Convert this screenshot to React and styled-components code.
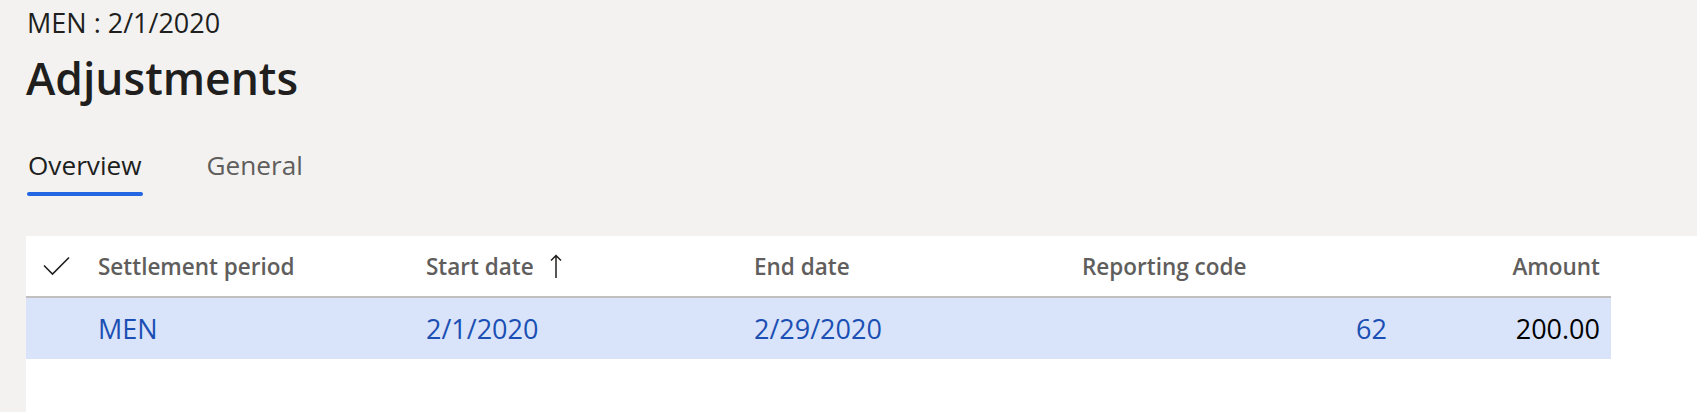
import React from "react";
import styled, { createGlobalStyle } from "styled-components";

const Global = createGlobalStyle`
  html, body {
    margin: 0;
    padding: 0;
    background: #f3f2f1;
    font-family: "Open Sans", "Noto Sans", sans-serif;
    color: #201f1e;
  }
  * { box-sizing: border-box; }
`;

const Page = styled.div`
  width: 1697px;
  height: 412px;
  overflow: hidden;
  padding-left: 26px;
  display: flex;
  flex-direction: column;
`;

const Caption = styled.div`
  height: 46px;
  line-height: 46px;
  font-size: 27px;
  color: #201f1e;
  padding-left: 1px;
`;

const Title = styled.h1`
  margin: 2px 0 0 0;
  height: 60px;
  line-height: 60px;
  font-size: 44.4px;
  font-weight: 600;
  color: #201f1e;
`;

const TabBar = styled.div`
  margin-top: 37px;
  display: flex;
  gap: 61px;
`;

const Tab = styled.div`
  display: flex;
  flex-direction: column;
  padding: 0 2px;
`;

const TabLabel = styled.span`
  height: 40px;
  line-height: 40px;
  font-size: 26.2px;
  color: ${(p) => (p.$active ? "#201f1e" : "#605e5c")};
`;

const TabLine = styled.span`
  margin-top: 7px;
  height: 4px;
  margin-left: -1px;
  margin-right: -1px;
  border-radius: 2px;
  background: ${(p) => (p.$active ? "#2266e3" : "transparent")};
`;

const Card = styled.div`
  margin-top: 40px;
  flex: 1;
  background: #ffffff;
`;

const cols = "72px 328px 328px 328px 316px 213px";

const HeaderRow = styled.div`
  display: grid;
  grid-template-columns: ${cols};
  width: 1585px;
  height: 62px;
  align-items: center;
  border-bottom: 2px solid #c2c0be;
`;

const DataRow = styled.div`
  display: grid;
  grid-template-columns: ${cols};
  width: 1585px;
  height: 61px;
  align-items: center;
  background: #d9e4fa;
`;

const HeadCell = styled.div`
  font-size: 22.5px;
  font-weight: 600;
  color: #605e5c;
  display: flex;
  align-items: center;
  justify-content: ${(p) => (p.$right ? "flex-end" : "flex-start")};
  padding-right: ${(p) => (p.$right ? "11px" : "0")};
  white-space: nowrap;
`;

const CheckCell = styled.div`
  padding-left: 17px;
  display: flex;
  align-items: center;
`;

const Cell = styled.div`
  font-size: 27px;
  color: ${(p) => (p.$plain ? "#000000" : "#1b4fb4")};
  text-align: ${(p) => (p.$right ? "right" : "left")};
  padding-right: ${(p) => (p.$right ? "11px" : "0")};
  white-space: nowrap;
`;

const SortArrow = styled.svg`
  margin-left: 16px;
  flex: none;
`;

const Check = () => (
  <svg width="27" height="20" viewBox="0 0 27 20">
    <polyline
      points="1,9.5 9.5,18 26,1.5"
      fill="none"
      stroke="#201f1e"
      strokeWidth="1.6"
    />
  </svg>
);

export default function App() {
  return (
    <>
      <Global />
      <Page>
        <Caption>MEN : 2/1/2020</Caption>
        <Title>Adjustments</Title>
        <TabBar>
          <Tab>
            <TabLabel $active>Overview</TabLabel>
            <TabLine $active />
          </Tab>
          <Tab>
            <TabLabel>General</TabLabel>
            <TabLine />
          </Tab>
        </TabBar>
        <Card>
          <HeaderRow>
            <CheckCell>
              <Check />
            </CheckCell>
            <HeadCell>Settlement period</HeadCell>
            <HeadCell>
              Start date
              <SortArrow width="12" height="24" viewBox="0 0 12 24">
                <path
                  d="M6 1.5V24M1 6.5L6 1.5L11 6.5"
                  fill="none"
                  stroke="#201f1e"
                  strokeWidth="1.5"
                />
              </SortArrow>
            </HeadCell>
            <HeadCell>End date</HeadCell>
            <HeadCell>Reporting code</HeadCell>
            <HeadCell $right>Amount</HeadCell>
          </HeaderRow>
          <DataRow>
            <span />
            <Cell>MEN</Cell>
            <Cell>2/1/2020</Cell>
            <Cell>2/29/2020</Cell>
            <Cell $right>62</Cell>
            <Cell $right $plain>200.00</Cell>
          </DataRow>
        </Card>
      </Page>
    </>
  );
}
